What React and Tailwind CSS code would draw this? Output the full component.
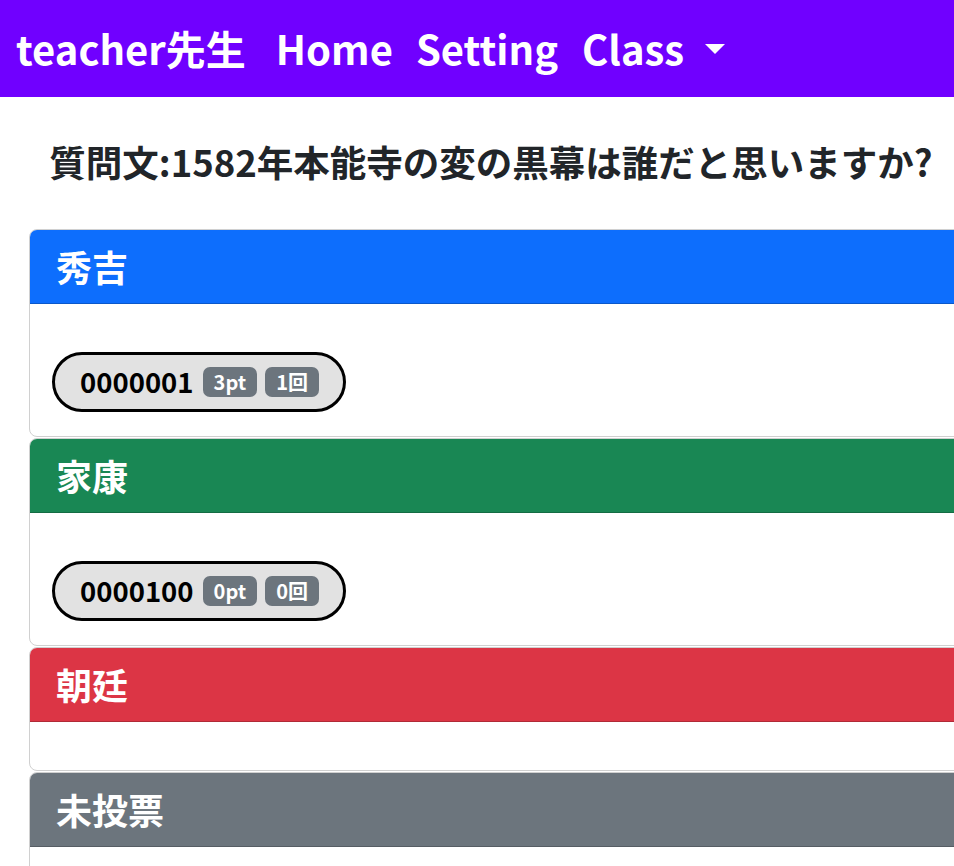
export default function App() {
  const font = { fontFamily: '"Noto Sans CJK JP", "Noto Sans", sans-serif' };
  const cards = [
    { name: "秀吉", color: "bg-[#0d6efd]", people: [{ id: "0000001", pt: "3pt", n: "1回" }] },
    { name: "家康", color: "bg-[#198754]", people: [{ id: "0000100", pt: "0pt", n: "0回" }] },
    { name: "朝廷", color: "bg-[#dc3545]", people: [] },
    { name: "未投票", color: "bg-[#6c757d]", people: [] },
  ];
  return (
    <div className="w-[954px] h-[866px] overflow-hidden bg-white text-[#212529]" style={font}>
      <nav className="h-[97px] bg-[#7000ff] flex items-center text-white font-bold text-[40px] leading-none">
        <span className="ml-[16px] -mt-[2px]">teacher先生</span>
        <span className="ml-[30px] -mt-[2px]">Home</span>
        <span className="ml-[23px] -mt-[2px]">Setting</span>
        <span className="ml-[24px] -mt-[2px] flex items-center">
          Class
          <span className="ml-[21px] mt-[2px] w-0 h-0 border-l-[10px] border-r-[10px] border-t-[10px] border-l-transparent border-r-transparent border-t-white"></span>
        </span>
      </nav>
      <div className="h-[132px] flex items-center justify-center pl-[28px] pb-[2px]">
        <h1 className="font-bold text-[36.5px] leading-none whitespace-nowrap">質問文:1582年本能寺の変の黒幕は誰だと思いますか?</h1>
      </div>
      <div className="ml-[29px] w-[1000px] flex flex-col gap-[1px]">
        {cards.map((c) => (
          <div key={c.name} className="border border-[#d0d0d0] rounded-[8px] overflow-hidden bg-white">
            <div className={`${c.color} h-[74px] flex items-center pl-[26px] border-b border-black/20 text-white font-bold text-[36px] leading-none`}>
              <span className="-mt-[1px]">{c.name}</span>
            </div>
            <div className="py-[24px] px-[22px]">
              {c.people.map((p) => (
                <div key={p.id} className="mt-[24px] inline-flex items-center h-[60px] border-[3px] border-black rounded-full bg-[#e2e2e2] pl-[25px] pr-[24px]">
                  <span className="font-bold text-[27.5px] leading-none text-black">{p.id}</span>
                  <span className="ml-[9px] h-[30px] px-[11px] rounded-[7px] bg-[#6c757d] text-white font-bold text-[20px] flex items-center leading-none">{p.pt}</span>
                  <span className="ml-[8px] h-[30px] px-[11px] rounded-[7px] bg-[#6c757d] text-white font-bold text-[20px] flex items-center leading-none">{p.n}</span>
                </div>
              ))}
            </div>
          </div>
        ))}
      </div>
    </div>
  );
}
